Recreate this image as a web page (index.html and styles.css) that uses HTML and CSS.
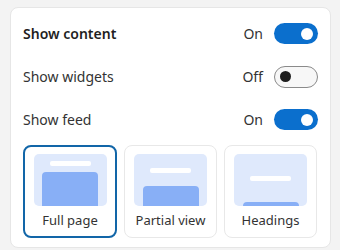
FILE: index.html
```html
<!DOCTYPE html>
<html>
<head>
<meta charset="utf-8">
<link rel="stylesheet" href="styles.css">
</head>
<body>
<div class="panel">
  <div class="row">
    <span class="label bold">Show content</span>
    <span class="state">On</span>
    <span class="toggle on"><span class="knob"></span></span>
  </div>
  <div class="row">
    <span class="label">Show widgets</span>
    <span class="state">Off</span>
    <span class="toggle off"><span class="knob"></span></span>
  </div>
  <div class="row">
    <span class="label">Show feed</span>
    <span class="state">On</span>
    <span class="toggle on"><span class="knob"></span></span>
  </div>
  <div class="options">
    <div class="option selected">
      <div class="preview full"><div class="bar"></div><div class="block"></div></div>
      <div class="opt-label">Full page</div>
    </div>
    <div class="option">
      <div class="preview partial"><div class="bar"></div><div class="block"></div></div>
      <div class="opt-label">Partial view</div>
    </div>
    <div class="option">
      <div class="preview headings"><div class="bar"></div><div class="block"></div></div>
      <div class="opt-label">Headings</div>
    </div>
  </div>
</div>
</body>
</html>
```
FILE: styles.css
```css
html, body {
  margin: 0;
  padding: 0;
  background: #f3f3f3;
  font-family: "Noto Sans", "Open Sans", sans-serif;
  color: #1f1f1f;
}
body {
  padding: 7px 9px 0 10px;
  height: 250px;
  box-sizing: border-box;
  overflow: hidden;
}
.panel {
  background: #fff;
  border: 1px solid #e6e6e6;
  border-radius: 8px;
  height: 241px;
  box-sizing: border-box;
  padding: 4px 12px 0 12px;
}
.row {
  display: flex;
  align-items: center;
  height: 43px;
}
.label {
  flex: 1;
  font-size: 14px;
  color: #333;
}
.label.bold {
  font-weight: 600;
  color: #1f1f1f;
}
.state {
  font-size: 14px;
  color: #333;
  margin-right: 11px;
}
.toggle {
  width: 44px;
  height: 21px;
  border-radius: 11px;
  box-sizing: border-box;
  display: flex;
  align-items: center;
  padding: 0 5px;
}
.toggle.on {
  background: #0b6fcd;
  justify-content: flex-end;
}
.toggle.off {
  background: #f7f7f7;
  border: 1px solid #8a8a8a;
  justify-content: flex-start;
  height: 22px;
}
.toggle .knob {
  width: 12px;
  height: 12px;
  border-radius: 50%;
  background: #fff;
}
.toggle.off .knob {
  background: #1e1e1e;
  width: 11px;
  height: 11px;
}
.options {
  display: grid;
  grid-template-columns: 94px 93px 93px;
  gap: 7px;
  margin-top: 4px;
}
.option {
  height: 93px;
  border: 1px solid #e8e8e8;
  border-radius: 8px;
  box-sizing: border-box;
  display: flex;
  flex-direction: column;
  align-items: center;
  padding-top: 8px;
}
.option.selected {
  border: 2px solid #1266a8;
  padding-top: 7px;
}
.preview {
  width: 73px;
  height: 52px;
  background: #dfe9fc;
  border-radius: 5px;
  overflow: hidden;
  display: flex;
  flex-direction: column;
  align-items: center;
}
.bar {
  width: 41px;
  height: 5px;
  background: #fff;
  border-radius: 2px;
}
.block {
  width: 56px;
  background: #88aff6;
  border-radius: 4px 4px 0 0;
  margin-top: auto;
}
.full .bar { margin-top: 7px; }
.full .block { height: 34px; }
.partial .bar { margin-top: 14px; }
.partial .block { height: 20px; }
.headings .bar { margin-top: 22px; }
.headings .block { height: 4px; }
.opt-label {
  font-size: 13px;
  color: #333;
  margin-top: 5px;
}
```
